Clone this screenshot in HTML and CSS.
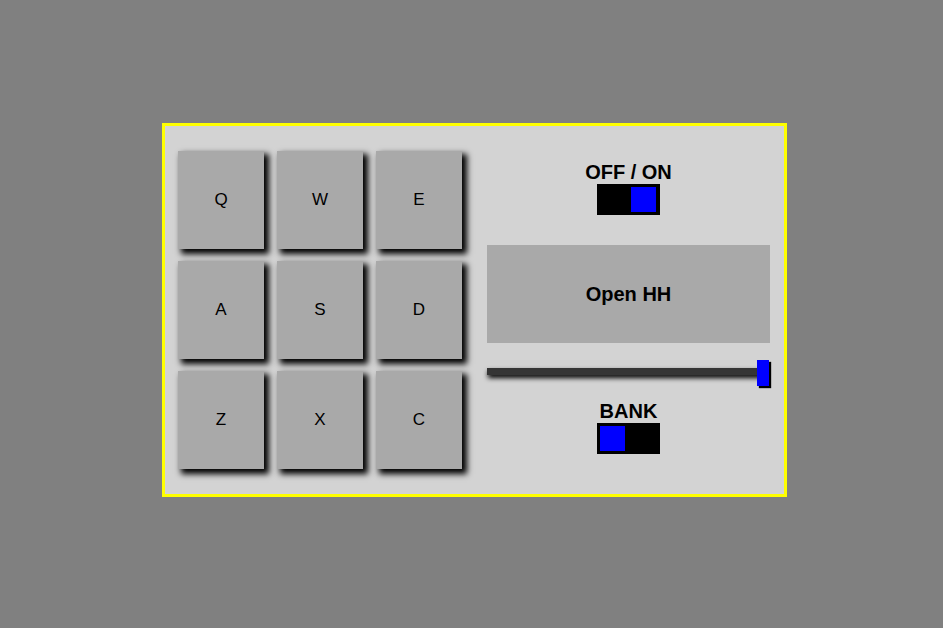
FILE: index.html
```
<!DOCTYPE html>
<html>
<head>
<meta charset="utf-8">
<link rel="stylesheet" href="styles.css">
</head>
<body>
<div class="page">
  <div class="machine">
    <div class="pad-bank">
      <div class="pad">Q</div>
      <div class="pad">W</div>
      <div class="pad">E</div>
      <div class="pad">A</div>
      <div class="pad">S</div>
      <div class="pad">D</div>
      <div class="pad">Z</div>
      <div class="pad">X</div>
      <div class="pad">C</div>
    </div>
    <div class="controls">
      <p class="label label-power">OFF / ON</p>
      <div class="toggle toggle-on"><div class="knob"></div></div>
      <p class="display">Open HH</p>
      <div class="slider">
        <div class="track"></div>
        <div class="thumb"></div>
      </div>
      <p class="label label-bank">BANK</p>
      <div class="toggle toggle-off"><div class="knob"></div></div>
    </div>
  </div>
</div>
</body>
</html>
```
FILE: styles.css
```
html, body {
  margin: 0;
  padding: 0;
  background: #808080;
  font-family: "Liberation Sans", Arial, sans-serif;
}
.page {
  padding: 123px 0 0 162px;
}
.machine {
  width: 619px;
  height: 368px;
  border: 3px solid #ffff00;
  background: #d3d3d3;
  box-sizing: content-box;
  display: flex;
  gap: 25px;
  padding: 0;
}
.pad-bank {
  display: grid;
  grid-template-columns: repeat(3, 86px);
  grid-auto-rows: 98px;
  column-gap: 13px;
  row-gap: 12px;
  margin: 25px 0 0 13px;
  align-content: start;
}
.pad {
  background: #a9a9a9;
  box-shadow: 4px 4px 6px 1px #000;
  display: flex;
  align-items: center;
  justify-content: center;
  font-size: 17px;
  color: #000;
}
.controls {
  width: 283px;
  display: flex;
  flex-direction: column;
  align-items: center;
  padding-top: 35px;
}
.label {
  margin: 0;
  font-size: 20px;
  line-height: 23px;
  font-weight: bold;
  color: #000;
}
.label-bank {
  margin-top: 14px;
}
.toggle {
  width: 63px;
  height: 31px;
  background: #000;
  padding: 3px;
  box-sizing: border-box;
  display: flex;
}
.toggle-on {
  justify-content: flex-end;
  padding-right: 4px;
}
.toggle-off {
  justify-content: flex-start;
}
.knob {
  width: 25px;
  height: 25px;
  background: #0000ff;
}
.display {
  margin: 30px 0 0;
  width: 283px;
  height: 98px;
  background: #a9a9a9;
  display: flex;
  align-items: center;
  justify-content: center;
  font-size: 20px;
  font-weight: bold;
  color: #000;
}
.slider {
  position: relative;
  width: 283px;
  height: 26px;
  margin-top: 17px;
}
.track {
  margin-top: 8px;
  width: 278px;
  height: 7px;
  background: #353535;
  box-shadow: 1px 3px 5px #000;
}
.thumb {
  position: absolute;
  right: 1px;
  top: 0;
  width: 12px;
  height: 26px;
  background: #0000ff;
  box-shadow: 2px 2px 1px #000;
}
```
